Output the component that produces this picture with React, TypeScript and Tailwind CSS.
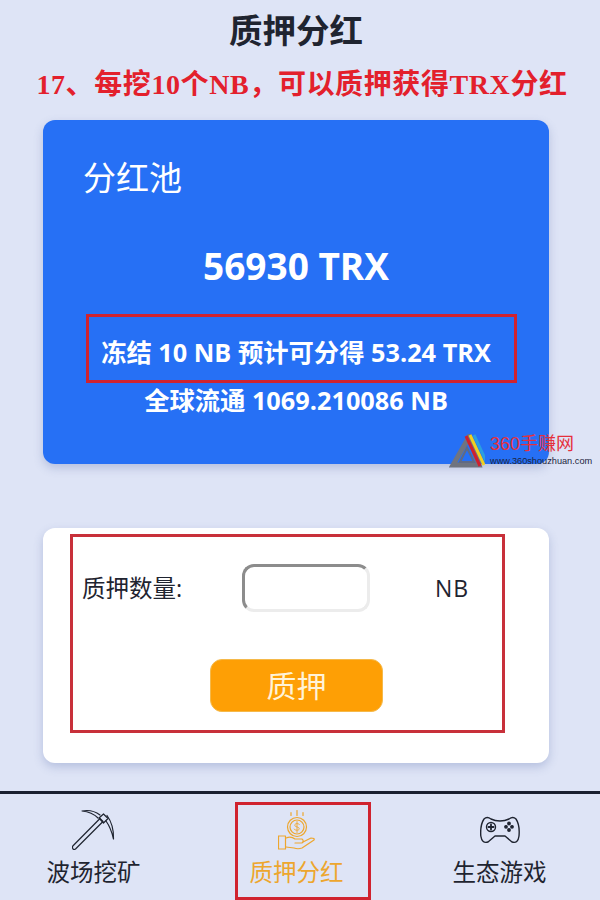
const cjk = "font-['Open_Sans','Noto_Sans_CJK_SC',sans-serif]";

function PickIcon() {
  return (
    <svg viewBox="0 0 44 41" className="w-[44px] h-[41px]" fill="none" stroke="#1f2430" strokeWidth="1.2" strokeLinejoin="round" strokeLinecap="round">
      <path d="M.8 37 L28 9.500 L31 12.500 L3.500 40 Q2 41 1 40 Q0 38.500 .8 37Z" />
      <path d="M27 9 L31.500 5 L36 9.500 L31.500 14 Z" />
      <path d="M28 6 Q20 0 10 2 Q20 3 26 9" />
      <path d="M35 6.500 Q42 16 41.500 30 Q39 19 34 12" />
    </svg>
  );
}

function CoinHandIcon() {
  return (
    <svg viewBox="0 0 38 40" className="w-[38px] h-[40px]" fill="none" stroke="#eda62e" strokeWidth="1.2" strokeLinejoin="round" strokeLinecap="round">
      <path d="M19 .5v5M13 2.500v3M25 2.500v3" />
      <circle cx="19" cy="17" r="9.500" />
      <circle cx="19" cy="17" r="7" />
      <path d="M21.500 14.500c-.5-1.200-4.500-1.500-4.800.6-.3 2.200 4.800 1.400 4.600 3.700-.2 2-4.600 1.800-5.200.3M19 11.500v11" strokeWidth="0.9" />
      <path d="M.5 26h7v13h-7z" />
      <path d="M8 28 Q13 26 17 29 L24 29 Q26.500 31 24 33 L17 33" />
      <path d="M25 32 L33 28 Q37 28 36 30 L24 38 Q20 39.500 16 38 L8 37" />
    </svg>
  );
}

function GamepadIcon() {
  return (
    <svg viewBox="0 0 40 28" className="w-[40px] h-[28px]" fill="none" stroke="#1f2430" strokeWidth="1.4" strokeLinejoin="round" strokeLinecap="round">
      <path d="M11 3 Q7 0 4 3 Q0 9 .8 20 Q2 28 8 26 L15 20 H25 L32 26 Q38 28 39 20 Q40 9 36 3 Q33 0 29 3 Q25 5 20 5 Q15 5 11 3Z" />
      <circle cx="11" cy="11" r="4.500" />
      <path d="M11 8.500v5M8.500 11h5" strokeWidth="1.800" />
      <circle cx="29" cy="7.500" r="1.200" fill="#1f2430" />
      <circle cx="29" cy="14" r="1.200" fill="#1f2430" />
      <circle cx="26" cy="10.800" r="1.200" fill="#1f2430" />
      <circle cx="32" cy="10.800" r="1.200" fill="#1f2430" />
    </svg>
  );
}

function Watermark() {
  return (
    <div className="absolute left-[449px] top-[434px] flex items-start">
      <svg viewBox="0 0 34 34" className="w-[36px] h-[34px]">
        <path d="M19 3 L3 31 H29 Z" fill="none" stroke="#6f7480" strokeWidth="5" />
        <path d="M17 14 L10 28 H24 Z" fill="none" stroke="#5f6a85" strokeWidth="2" />
        <path d="M16 2 L30 32" stroke="#d0202e" strokeWidth="3" />
        <path d="M20 1 L34 31" stroke="#f0d020" strokeWidth="3" />
        <path d="M24 1 L37 29" stroke="#2aa0e0" strokeWidth="3" />
      </svg>
      <div className="ml-[5px] flex flex-col">
        <span className="text-[18px] leading-[20px] text-[#e5303c] font-['Liberation_Sans','Noto_Sans_CJK_SC',sans-serif]">360手赚网</span>
        <span className="mt-[1px] text-[9.200px] leading-[12px] text-[#1c2440] font-['Liberation_Sans',sans-serif]">www.360shouzhuan.com</span>
      </div>
    </div>
  );
}

function TabItem({ icon, label, active }: { icon: React.ReactNode; label: string; active?: boolean }) {
  return (
    <div className="w-[203px] flex flex-col items-center">
      <div className="h-[56px] flex items-end justify-center">{icon}</div>
      <span className={"mt-[7px] text-[23.500px] leading-[30px] " + (active ? "text-[#eda62e]" : "text-[#1f2430]")}>{label}</span>
    </div>
  );
}

export default function App() {
  return (
    <div className={"relative w-[600px] h-[900px] overflow-hidden bg-[#dee4f6] flex flex-col " + cjk}>
      <h1 className="mt-[10px] pr-[8px] text-center text-[33.500px] leading-[40px] font-bold text-[#1f2430]">质押分红</h1>
      <p className="mt-[19px] pl-[4px] text-center text-[28px] leading-[32px] tracking-[0.6px] font-bold text-[#e3202c] whitespace-nowrap font-['Liberation_Serif','Noto_Sans_CJK_SC',serif]">
        17、每挖10个NB，可以质押获得TRX分红
      </p>

      <section className="ml-[43px] mt-[19px] w-[506px] h-[344px] rounded-[12px] bg-[#2670f5] shadow-[0_4px_10px_rgba(90,110,170,0.3)] text-white flex flex-col">
        <div className="mt-[36px] ml-[40px] text-[33px] leading-[44px]">分红池</div>
        <div className="mt-[42px] text-center text-[37px] leading-[48px] font-bold">56930 TRX</div>
        <div className="mt-[46px] text-center text-[25.300px] leading-[32px] font-bold">冻结 10 NB 预计可分得 53.24 TRX</div>
        <div className="mt-[16px] text-center text-[25.300px] leading-[32px] font-bold">全球流通 1069.210086 NB</div>
      </section>

      <section className="ml-[43px] mt-[64px] w-[506px] h-[235px] rounded-[12px] bg-white shadow-[0_4px_10px_rgba(90,110,170,0.3)] flex flex-col">
        <div className="mt-[36px] flex items-center text-[#1f2430]">
          <span className="ml-[39px] w-[160px] text-[23.500px] leading-[48px]">质押数量:</span>
          <input className="w-[128px] h-[48px] rounded-[12px] bg-white border-[3px] border-[#ececec] border-t-[#8c8c8c] border-l-[#8c8c8c] outline-none" />
          <span className="ml-[65px] text-[23px] tracking-[1px] leading-[48px]">NB</span>
        </div>
        <button className="mt-[47px] ml-[167px] w-[173px] h-[53px] rounded-[12px] bg-[#fe9f05] border border-[#f5b94a] text-[#fff3d8] text-[30px] leading-none">质押</button>
      </section>

      <nav className="mt-auto h-[109px] border-t-[3px] border-[#1a2030] flex">
        <div className="-ml-[8px] flex">
          <TabItem icon={<PickIcon />} label="波场挖矿" />
          <TabItem icon={<CoinHandIcon />} label="质押分红" active />
          <TabItem icon={<div className="mb-[6px]"><GamepadIcon /></div>} label="生态游戏" />
        </div>
      </nav>

      {/* red annotation boxes drawn over the screenshot */}
      <div className="absolute left-[86px] top-[314px] w-[431px] h-[69px] border-[3px] border-[#d0232f]" />
      <div className="absolute left-[70px] top-[534px] w-[435px] h-[199px] border-[3px] border-[#c8303a]" />
      <div className="absolute left-[235px] top-[802px] w-[136px] h-[98px] border-[3px] border-[#d0232f]" />
      <Watermark />
    </div>
  );
}
